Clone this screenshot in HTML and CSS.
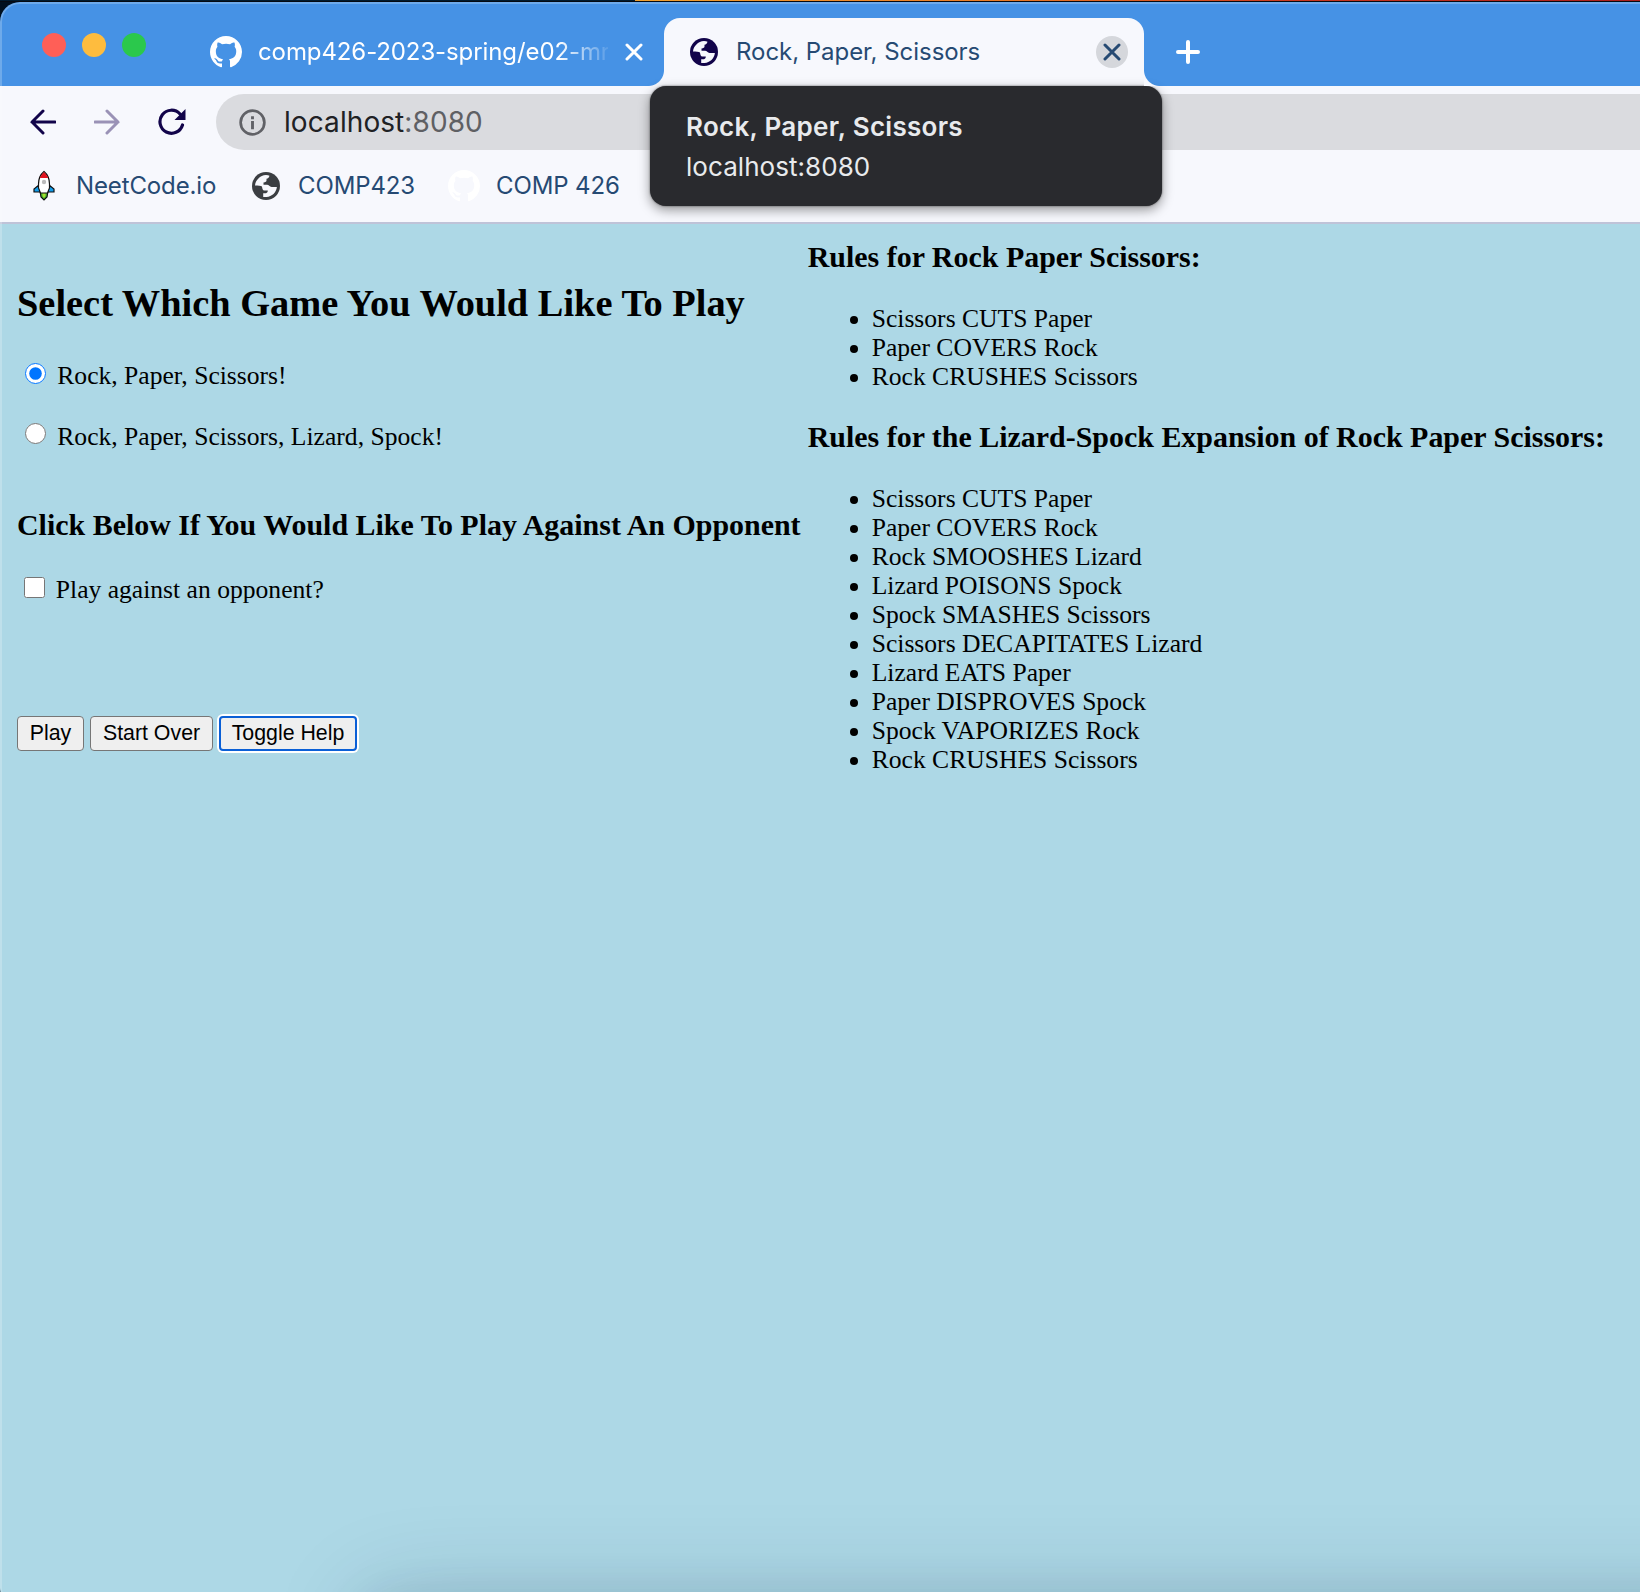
FILE: index.html
```html
<!DOCTYPE html>
<html lang="en">
<head>
<meta charset="utf-8">
<title>Rock, Paper, Scissors</title>
<link rel="stylesheet" href="styles.css">
</head>
<body>
<svg class="defs" width="0" height="0" aria-hidden="true">
  <symbol id="github" viewBox="0 0 16 16"><path fill="currentColor" d="M8 0C3.58 0 0 3.58 0 8c0 3.54 2.29 6.53 5.47 7.59.4.07.55-.17.55-.38 0-.19-.01-.82-.01-1.49-2.01.37-2.53-.49-2.69-.94-.09-.23-.48-.94-.82-1.13-.28-.15-.68-.52-.01-.53.63-.01 1.08.58 1.23.82.72 1.21 1.87.87 2.33.66.07-.52.28-.87.51-1.07-1.78-.2-3.64-.89-3.64-3.95 0-.87.31-1.59.82-2.15-.08-.2-.36-1.02.08-2.12 0 0 .67-.21 2.2.82.64-.18 1.32-.27 2-.27s1.36.09 2 .27c1.53-1.04 2.2-.82 2.2-.82.44 1.1.16 1.92.08 2.12.51.56.82 1.27.82 2.15 0 3.07-1.87 3.75-3.65 3.95.29.25.54.73.54 1.48 0 1.07-.01 1.93-.01 2.2 0 .21.15.46.55.38A8.01 8.01 0 0 0 16 8c0-4.42-3.58-8-8-8z"/></symbol>
  <symbol id="globe" viewBox="0 0 28 28"><circle cx="14" cy="14" r="14" fill="currentColor"/><path class="land" d="M3 13.500C3.500 8 8 3.500 14 3C15.500 3 16.600 3.300 17.500 3.700C17 5.500 15.800 6.600 14.500 6.700V8.500C14.500 9.700 13.500 10.300 11.500 10.400V12.800H15C17 12.800 17.400 15 19.600 15H24.900C24.300 20.500 20 24.600 14.500 25H11.200V21.300H14C15.200 21 15.800 20 15.800 18.600H12.300C10.600 18.400 10.300 17 10 14.600C9 13.500 6 13.500 3 13.500Z"/></symbol>
  <symbol id="cross" viewBox="0 0 18 18"><path d="M2 2L16 16M16 2L2 16" fill="none" stroke="currentColor" stroke-width="3" stroke-linecap="round"/></symbol>
</svg>
<div class="backdrop"></div>
<div class="window">
  <header class="tabbar">
    <div class="lights"><i class="light red"></i><i class="light yellow"></i><i class="light green"></i></div>
    <div class="tab idle">
      <svg class="octocat"><use href="#github"/></svg>
      <span class="tab-title fade">comp426-2023-spring/e02-mr</span>
      <svg class="cross"><use href="#cross"/></svg>
    </div>
    <div class="tab active">
      <svg class="globe"><use href="#globe"/></svg>
      <span class="tab-title">Rock, Paper, Scissors</span>
      <span class="close"><svg class="cross"><use href="#cross"/></svg></span>
      <div class="tooltip"><b>Rock, Paper, Scissors</b><span>localhost:8080</span></div>
    </div>
    <svg class="plus" viewBox="0 0 24 24"><path d="M12 2V22M2 12H22" stroke="currentColor" stroke-width="4" stroke-linecap="round"/></svg>
  </header>
  <nav class="toolbar">
    <svg class="nav-icon" viewBox="0 0 26 26"><path d="M25 13H2M13 2L2 13L13 24" fill="none" stroke="currentColor" stroke-width="3" stroke-linecap="round"/></svg>
    <svg class="nav-icon dim" viewBox="0 0 26 26"><path d="M1 13H24M13 2L24 13L13 24" fill="none" stroke="currentColor" stroke-width="3" stroke-linecap="round"/></svg>
    <svg class="reload" viewBox="0 0 28 28"><path d="M24.500 17A11.500 11.500 0 1 1 22 6" fill="none" stroke="currentColor" stroke-width="3.200" stroke-linecap="round"/><path d="M27.500 1V12H16.500Z" fill="currentColor"/></svg>
    <div class="address">
      <svg class="info" viewBox="0 0 28 28"><circle cx="14" cy="14" r="12.300" fill="none" stroke="currentColor" stroke-width="2.800"/><path d="M12.500 7.500h3v3h-3zM12.500 12.500h3v8.500h-3z" fill="currentColor"/></svg>
      <span class="url">localhost<span class="port">:8080</span></span>
    </div>
  </nav>
  <nav class="bookmarks">
    <a class="bookmark"><svg class="rocket" viewBox="0 0 22 32"><path d="M7 21H15L14 27L11 30L8 27Z" fill="#45b52e" stroke="#111" stroke-width="1.200"/><path d="M9.500 22h3v4l-1.500 2-1.500-2z" fill="#a8e030"/><path d="M6 15L1 19V22H7ZM16 15L21 19V22H15Z" fill="#129be8" stroke="#111" stroke-width="1.200"/><path d="M11 1.500C8 4 5.500 9 5.500 14V18L7.500 23H14.500L16.500 18V14C16.500 9 14 4 11 1.500Z" fill="#fff" stroke="#111" stroke-width="1.200"/><path d="M11 2C9 4 7.500 6 6.800 8H15.200C14.500 6 13 4 11 2Z" fill="#e0141f"/><circle cx="11" cy="12" r="2.200" fill="#bbb"/></svg><span class="neet">NeetCode.io</span></a>
    <a class="bookmark"><svg class="globe grey"><use href="#globe"/></svg><span class="c423">COMP423</span></a>
    <a class="bookmark"><svg class="octocat"><use href="#github"/></svg><span class="c426">COMP 426</span></a>
  </nav>
  <main class="page">
    <form class="game">
      <h2>Select Which Game You Would Like To Play</h2>
      <label class="option"><input type="radio" name="game" checked>Rock, Paper, Scissors!</label>
      <label class="option second"><input type="radio" name="game">Rock, Paper, Scissors, Lizard, Spock!</label>
      <h3>Click Below If You Would Like To Play Against An Opponent</h3>
      <label class="option check"><input type="checkbox">Play against an opponent?</label>
      <div class="actions">
        <button type="button" class="play">Play</button>
        <button type="button" class="over">Start Over</button>
        <button type="button" class="help">Toggle Help</button>
      </div>
    </form>
    <section class="rules">
      <h3>Rules for Rock Paper Scissors:</h3>
      <ul>
        <li>Scissors CUTS Paper</li>
        <li>Paper COVERS Rock</li>
        <li>Rock CRUSHES Scissors</li>
      </ul>
      <h3>Rules for the Lizard-Spock Expansion of Rock Paper Scissors:</h3>
      <ul>
        <li>Scissors CUTS Paper</li>
        <li>Paper COVERS Rock</li>
        <li>Rock SMOOSHES Lizard</li>
        <li>Lizard POISONS Spock</li>
        <li>Spock SMASHES Scissors</li>
        <li>Scissors DECAPITATES Lizard</li>
        <li>Lizard EATS Paper</li>
        <li>Paper DISPROVES Spock</li>
        <li>Spock VAPORIZES Rock</li>
        <li>Rock CRUSHES Scissors</li>
      </ul>
    </section>
    <div class="dock-shadow"></div>
  </main>
</div>
</body>
</html>
```
FILE: styles.css
```css
* { box-sizing: border-box; }
html { height: 1592px; overflow: hidden; }
body {
  margin: 0;
  height: 1592px;
  overflow: hidden;
  background: #00101f;
  font-family: Inter, "Liberation Sans", sans-serif;
}
svg { display: block; flex: none; }
.defs { position: absolute; }
.backdrop {
  height: 2px;
  border-bottom: 1px solid #050a12;
  background: linear-gradient(90deg, #001b30 635px, #f0a030 635px, #e87b26 1000px, #c8381f 1300px, #a81f1c 1640px);
}
.window {
  position: relative;
  height: 1602px;
  display: flex;
  flex-direction: column;
  border-radius: 20px 0 0 16px;
  overflow: hidden;
}
.window::after {
  content: "";
  position: absolute;
  inset: 0 -4px 0 0;
  border: 2px solid rgba(255, 255, 255, .22);
  border-radius: 20px 0 0 16px;
  pointer-events: none;
}

.tabbar {
  height: 84px;
  flex: none;
  display: flex;
  align-items: flex-end;
  background: #4692e5;
  color: #fff;
}
.lights { display: flex; gap: 16px; padding-left: 42px; margin-bottom: 29px; width: 210px; flex: none; }
.light { width: 24px; height: 24px; border-radius: 50%; }
.red { background: #ff5f57; }
.yellow { background: #febc3e; }
.green { background: #2bc84c; }
.tab { display: flex; align-items: center; height: 68px; flex: none; }
.idle { width: 454px; }
.octocat { width: 32px; height: 32px; }
.tab-title { font-size: 24px; line-height: 30px; white-space: nowrap; letter-spacing: -.04px; }
.fade {
  width: 350px;
  margin-left: 16px;
  overflow: hidden;
  letter-spacing: -.1px;
  -webkit-mask-image: linear-gradient(90deg, #000 300px, transparent 356px);
}
.idle .cross { margin-left: 17px; }
.cross { width: 18px; height: 18px; }
.active {
  position: relative;
  z-index: 2;
  width: 480px;
  padding-left: 26px;
  background: #f7f8fd;
  border-radius: 16px 16px 0 0;
  color: #264a73;
}
.active::before, .active::after {
  content: "";
  position: absolute;
  bottom: 0;
  width: 16px;
  height: 16px;
}
.active::before { left: -16px; background: radial-gradient(circle at 0 0, transparent 15.5px, #f7f8fd 16.5px); }
.active::after { right: -16px; background: radial-gradient(circle at 100% 0, transparent 15.5px, #f7f8fd 16.5px); }
.globe { width: 28px; height: 28px; color: #12044a; margin-right: 18px; }
.land { fill: #f7f8fd; }
.close {
  width: 32px;
  height: 32px;
  margin: 0 16px 0 auto;
  display: flex;
  align-items: center;
  justify-content: center;
  border-radius: 50%;
  background: #d5d7dc;
}
.plus { width: 24px; height: 24px; margin: 0 0 22px 32px; }
.tooltip {
  position: absolute;
  left: -14px;
  top: 68px;
  width: 512px;
  height: 120px;
  padding: 21px 36px;
  display: flex;
  flex-direction: column;
  border-radius: 16px;
  background: #292a2e;
  box-shadow: 0 0 2px rgba(0, 0, 0, .6), 0 4px 12px rgba(0, 0, 0, .4);
  color: #e8eaed;
  font-size: 26px;
  line-height: 40px;
  white-space: nowrap;
}
.tooltip b { font-weight: 600; letter-spacing: .3px; }
.tooltip span { letter-spacing: .05px; }

.toolbar {
  height: 72px;
  flex: none;
  display: flex;
  align-items: center;
  padding: 0 0 0 30px;
  background: #f7f8fd;
  color: #12044a;
}
.nav-icon { width: 26px; height: 26px; margin-right: 38px; margin-top: -1px; }
.dim { color: #9a92b6; }
.reload { width: 28px; height: 28px; margin-right: 30px; }
.address {
  flex: 1;
  height: 56px;
  display: flex;
  align-items: center;
  padding-left: 23px;
  border-radius: 28px 0 0 28px;
  background: #dadbdf;
}
.info { width: 27px; height: 27px; color: #606166; margin-right: 18px; }
.url { font-size: 28px; line-height: 36px; color: #202124; letter-spacing: .08px; }
.port { color: #5f6064; }

.bookmarks {
  height: 66px;
  flex: none;
  display: flex;
  padding: 12px 0 0 33px;
  background: #f7f8fd;
  border-bottom: 2px solid #bfc3d8;
  color: #264a73;
  font-size: 24px;
  letter-spacing: -.12px;
}
.bookmark { display: flex; align-items: center; height: 32px; white-space: nowrap; }
.bookmark span { margin-top: -2px; }
.rocket { width: 22px; height: 32px; margin-right: 21px; }
.neet { width: 176px; }
.grey { color: #3b3e42; }
.c423 { width: 150px; }
.bookmark .octocat { color: #fff; margin-right: 16px; }

.page {
  position: relative;
  flex: 1;
  display: flex;
  padding: 0 0 0 17px;
  overflow: hidden;
  background: #add8e6;
  color: #000;
  font: 25.6px/29px "Liberation Serif", "Times New Roman", serif;
}
.game { width: 790.7px; flex: none; padding-top: 57px; }
h2 { margin: 0; font-size: 38.4px; line-height: 44px; white-space: nowrap; }
h3 { margin: 0; font-size: 29.952px; line-height: 34px; white-space: nowrap; }
.option { display: flex; height: 29px; margin-top: 36px; }
.option input { width: 20.8px; height: 20.8px; margin: 2px 11.5px 0 8px; }
.second { margin: 32px 0 57px; }
.second input { margin-top: 1px; }
.check { margin-top: 33px; }
.check input { margin: 2px 11px 0 7px; }
.actions { display: flex; margin-top: 112px; }
button {
  height: 35px;
  padding: 0;
  border: 1px solid #767676;
  border-radius: 4px;
  background: #efefef;
  color: #000;
  font: 21.333px/31px "Liberation Sans", Arial, sans-serif;
}
.play { width: 67px; }
.over { width: 123px; margin: 0 6px; }
.help { width: 138px; border: 2px solid #0a5fd6; box-shadow: 0 0 0 2px #fff; line-height: 29px; }
.rules { padding-top: 16px; }
ul { margin: 30px 0 29px; padding: 0 0 0 64px; }
.dock-shadow {
  position: absolute;
  left: 368px;
  right: -200px;
  top: 1378px;
  height: 100px;
  box-shadow: 0 0 100px rgba(20, 40, 70, .2), 0 0 50px rgba(20, 40, 70, .1);
}
```
